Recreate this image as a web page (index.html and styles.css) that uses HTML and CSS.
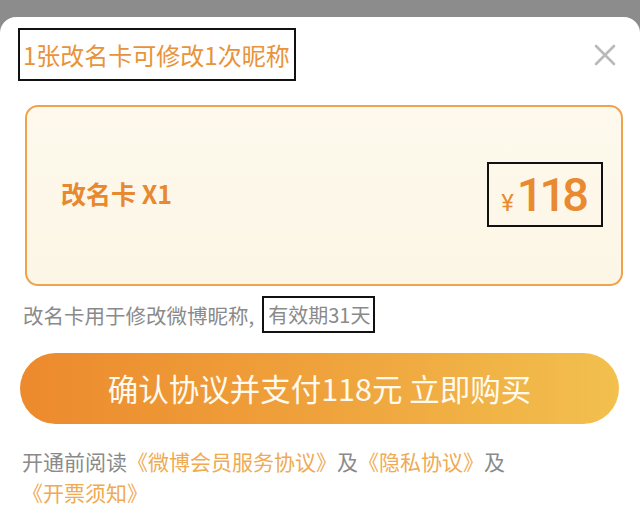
FILE: index.html
```html
<!DOCTYPE html>
<html lang="zh-CN">
<head>
<meta charset="utf-8">
<title>改名卡</title>
<link rel="stylesheet" href="styles.css">
</head>
<body>
<div class="sheet">
  <div class="header">
    <div class="title">1张改名卡可修改1次昵称</div>
    <svg class="close" width="22" height="22" viewBox="0 0 22 22" aria-label="关闭">
      <path d="M2 2 L20 20 M20 2 L2 20" stroke="#b9b9b9" stroke-width="2.6" stroke-linecap="round" fill="none"/>
    </svg>
  </div>
  <div class="card">
    <div class="card-label">改名卡 X1</div>
    <div class="price"><span class="yen">¥</span><span class="amount">118</span></div>
  </div>
  <div class="desc"><span>改名卡用于修改微博昵称,</span><span class="valid">有效期31天</span></div>
  <div class="buy">确认协议并支付118元 立即购买</div>
  <p class="terms">开通前阅读<span class="link">《微博会员服务协议》</span>及<span class="link">《隐私协议》</span>及<span class="link">《开票须知》</span></p>
</div>
</body>
</html>
```
FILE: styles.css
```css
html, body {
  margin: 0;
  height: 100%;
  overflow: hidden;
}
body {
  background: #8c8c8c;
  font-family: "Noto Sans CJK SC", "Noto Sans", sans-serif;
}
.sheet {
  margin-top: 17px;
  height: calc(100% - 17px);
  background: #ffffff;
  border-radius: 16px 16px 0 0;
  padding: 11px 20px 0 20px;
  box-sizing: border-box;
}
.header {
  display: flex;
  justify-content: space-between;
  align-items: center;
}
.title {
  margin-left: -2px;
  border: 2px solid #111;
  height: 49px;
  line-height: 49px;
  padding: 0 4px 0 3px;
  font-size: 24px;
  color: #e8933a;
  white-space: nowrap;
}
.close {
  margin-right: 4px;
}
.card {
  margin: 24px -3px 0 5px;
  height: 181px;
  box-sizing: border-box;
  border: 2px solid #f0a24c;
  border-radius: 13px;
  background: linear-gradient(180deg, #fdf9ec 0%, #fcf6e6 100%);
  display: flex;
  align-items: center;
  justify-content: space-between;
  padding: 0 18px 0 34px;
}
.card-label {
  font-size: 25px;
  font-weight: 700;
  color: #e8882f;
  margin-top: -6px;
}
.price {
  border: 2px solid #111;
  width: 116px;
  height: 65px;
  box-sizing: border-box;
  display: flex;
  align-items: baseline;
  justify-content: center;
  line-height: 61px;
  color: #e98a30;
  margin-top: -2px;
}
.yen {
  font-family: "Roboto", sans-serif;
  font-size: 24px;
  margin-right: 3px;
}
.amount {
  font-family: "Roboto", sans-serif;
  font-size: 47px;
  font-weight: 500;
  letter-spacing: -4px;
  margin-right: 4px;
}
.desc {
  margin-top: 10px;
  display: flex;
  align-items: center;
  font-size: 20.5px;
  color: #8a8a8a;
  white-space: nowrap;
}
.desc > span:first-child {
  margin-left: 3px;
}
.valid {
  margin-left: 8px;
  border: 2px solid #111;
  height: 33px;
  line-height: 33px;
  padding: 0 3px 0 4px;
  font-size: 20px;
}
.buy {
  margin-top: 20px;
  height: 71px;
  border-radius: 36px;
  background: linear-gradient(90deg, #ec8a2d 0%, #efa23c 50%, #f2c04e 100%);
  color: #fffaf0;
  font-size: 30.5px;
  line-height: 71px;
  text-align: center;
  margin-right: 1px;
}
.terms {
  margin: 22px 0 0 2px;
  font-size: 21px;
  line-height: 30.5px;
  color: #8a8a8a;
}
.link {
  color: #efaa52;
  white-space: nowrap;
}
```
